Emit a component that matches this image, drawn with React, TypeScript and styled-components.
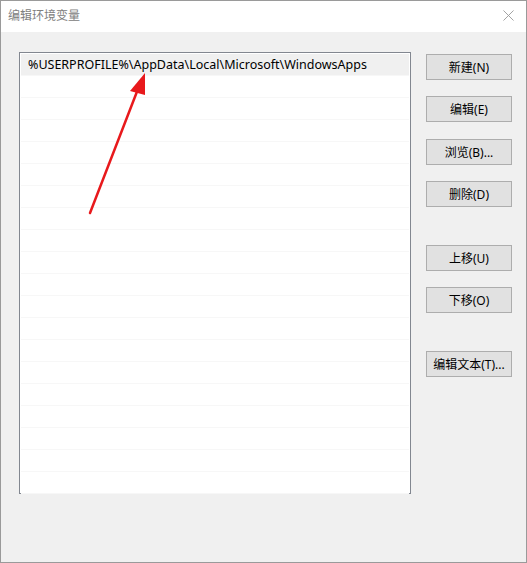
import React, {ReactElement} from 'react';
import styled, {createGlobalStyle} from 'styled-components';

const GlobalStyle = createGlobalStyle`
    html, body {
        margin: 0;
        padding: 0;
        background: #f0f0f0;
    }
    * {
        box-sizing: border-box;
    }
`;

const fontStack = `"Noto Sans", "Noto Sans CJK SC", sans-serif`;

const paths = ['%USERPROFILE%\\AppData\\Local\\Microsoft\\WindowsApps'];
const rowCount = 20;

type ButtonSpec = {label: string; gapBefore: number};

const buttons: ButtonSpec[] = [
    {label: '新建(N)', gapBefore: 0},
    {label: '编辑(E)', gapBefore: 16},
    {label: '浏览(B)...', gapBefore: 17},
    {label: '删除(D)', gapBefore: 16},
    {label: '上移(U)', gapBefore: 38},
    {label: '下移(O)', gapBefore: 16},
    {label: '编辑文本(T)...', gapBefore: 38},
];

export default function App(): ReactElement {
    return (
        <>
            <GlobalStyle />
            <Window>
                <TitleBar>
                    <Title>编辑环境变量</Title>
                    <CloseIcon viewBox="0 0 12 12">
                        <path d="M0.5 0.5 L11.5 11.5 M11.5 0.5 L0.5 11.5" />
                    </CloseIcon>
                </TitleBar>
                <Body>
                    <ListBox>
                        {Array.from({length: rowCount}).map((_, i) => (
                            <Row key={i} selected={i === 0}>
                                {paths[i] ?? ''}
                            </Row>
                        ))}
                        <Arrow viewBox="0 0 200 200">
                            <line x1="70" y1="160" x2="118" y2="36" />
                            <polygon points="125,20 110,38 125,42" />
                        </Arrow>
                    </ListBox>
                    <ButtonColumn>
                        {buttons.map((b) => (
                            <DialogButton key={b.label} gapBefore={b.gapBefore}>
                                {b.label}
                            </DialogButton>
                        ))}
                    </ButtonColumn>
                </Body>
            </Window>
        </>
    );
}

const Window = styled.div`
    width: 527px;
    height: 563px;
    border: 1px solid #9a9a9a;
    background: #f0f0f0;
    display: flex;
    flex-flow: column nowrap;
    font-family: ${fontStack};
`;

const TitleBar = styled.div`
    height: 31px;
    background: #ffffff;
    display: flex;
    align-items: center;
    justify-content: space-between;
    padding: 0 12px 3px 7px;
`;

const Title = styled.span`
    font-size: 12px;
    color: #808080;
`;

const CloseIcon = styled.svg`
    width: 11px;
    height: 11px;
    stroke: #9a9a9a;
    stroke-width: 1;
    fill: none;
`;

const Body = styled.div`
    flex: 1;
    display: flex;
    padding: 20px 0 0 18px;
    gap: 15px;
`;

const ListBox = styled.div`
    position: relative;
    width: 392px;
    height: 442px;
    background: #ffffff;
    border: 1px solid #828790;
    padding: 1px;
    display: flex;
    flex-flow: column nowrap;
`;

const Row = styled.div<{selected: boolean}>`
    height: 22px;
    flex: none;
    background: ${({selected}): string => (selected ? '#f0f0f0' : '#ffffff')};
    border-bottom: 1px solid #f7f7f7;
    font-size: 12.5px;
    line-height: 21px;
    color: #000000;
    padding-left: 7px;
    white-space: nowrap;
`;

const Arrow = styled.svg`
    position: absolute;
    left: 0;
    top: 0;
    width: 200px;
    height: 200px;
    overflow: visible;
    line {
        stroke: #e8191c;
        stroke-width: 2.5;
        stroke-linecap: round;
    }
    polygon {
        fill: #e8191c;
    }
`;

const ButtonColumn = styled.div`
    display: flex;
    flex-flow: column nowrap;
    padding-top: 2px;
`;

const DialogButton = styled.button<{gapBefore: number}>`
    width: 86px;
    height: 26px;
    margin-top: ${({gapBefore}): string => `${gapBefore}px`};
    background: #e1e1e1;
    border: 1px solid #adadad;
    font-family: ${fontStack};
    font-size: 12px;
    color: #000000;
    padding: 0;
    white-space: nowrap;
`;
